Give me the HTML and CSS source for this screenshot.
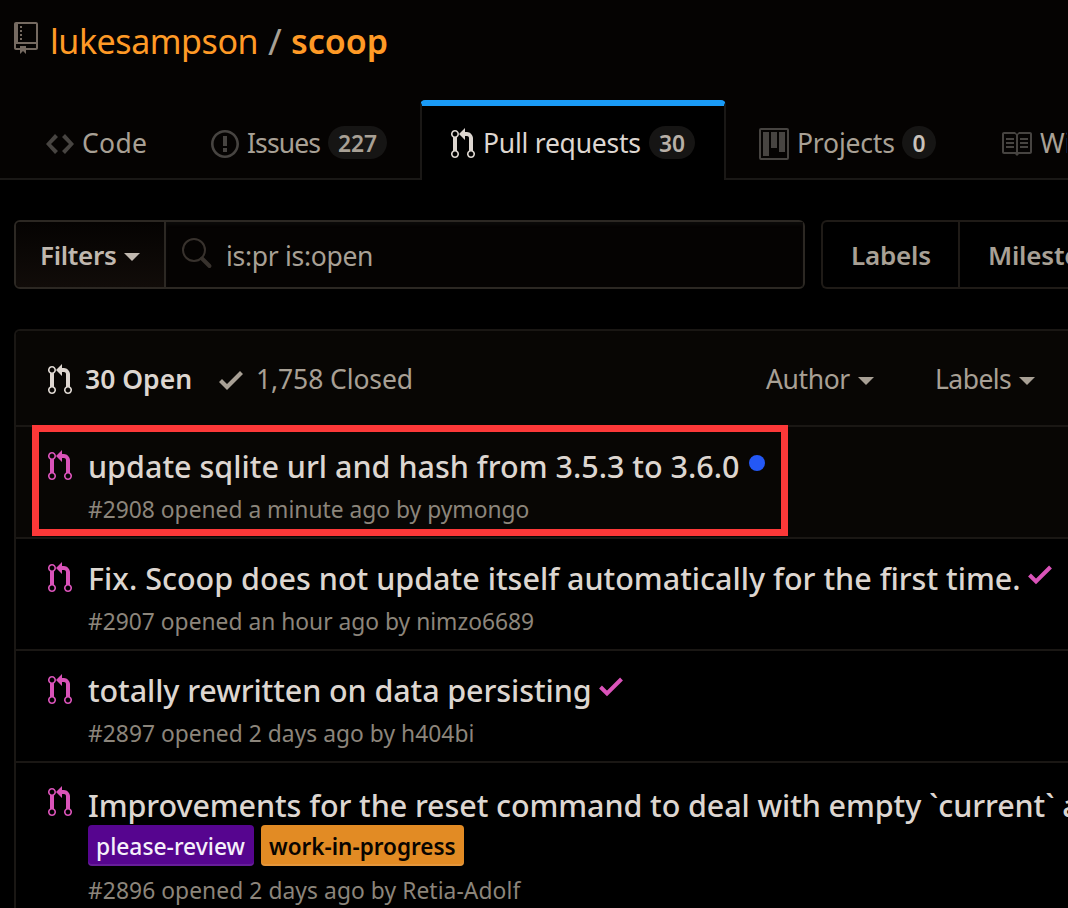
FILE: index.html
```html
<!DOCTYPE html>
<html lang="en">
<head>
<meta charset="utf-8">
<title>Pull requests · lukesampson/scoop</title>
<link rel="stylesheet" href="styles.css">
</head>
<body>
<svg class="sprite" aria-hidden="true">
  <symbol id="pr" viewBox="0 0 12 16"><path d="M11 11.28V5c-.03-.78-.34-1.47-.94-2.06C9.46 2.35 8.78 2.03 8 2H7V0L4 3l3 3V4h1c.27.02.48.11.69.31.21.2.3.42.31.69v6.28A1.993 1.993 0 0010 15a1.993 1.993 0 001-3.72zm-1 2.92c-.66 0-1.2-.55-1.2-1.2 0-.65.55-1.2 1.2-1.2.65 0 1.2.55 1.2 1.2 0 .65-.55 1.2-1.2 1.2zM4 3c0-1.11-.89-2-2-2a1.993 1.993 0 00-1 3.72v6.56A1.993 1.993 0 002 15a1.993 1.993 0 001-3.72V4.72c.59-.34 1-.98 1-1.72zm-.8 10c0 .66-.55 1.2-1.2 1.2-.65 0-1.2-.55-1.2-1.2 0-.65.55-1.2 1.2-1.2.65 0 1.2.55 1.2 1.2zM2 4.2C1.34 4.2.8 3.65.8 3c0-.65.55-1.2 1.2-1.2.65 0 1.2.55 1.2 1.2 0 .65-.55 1.2-1.2 1.2z"/></symbol>
  <symbol id="repo" viewBox="0 0 12 16"><path d="M4 9H3V8h1v1zm0-3H3v1h1V6zm0-2H3v1h1V4zm0-2H3v1h1V2zm8-1v12c0 .55-.45 1-1 1H6v2l-1.5-1.5L3 16v-2H1c-.55 0-1-.45-1-1V1c0-.55.45-1 1-1h10c.55 0 1 .45 1 1zm-1 10H1v2h2v-1h3v1h5v-2zm0-10H2v9h9V1z"/></symbol>
  <symbol id="code" viewBox="0 0 14 16"><path d="M9.5 3L8 4.5 11.5 8 8 11.5 9.5 13 14 8 9.5 3zm-5 0L0 8l4.5 5L6 11.5 2.5 8 6 4.5 4.5 3z"/></symbol>
  <symbol id="issue" viewBox="0 0 14 16"><path d="M7 2.3c3.14 0 5.7 2.56 5.7 5.7s-2.56 5.7-5.7 5.7A5.71 5.71 0 011.3 8c0-3.14 2.56-5.7 5.7-5.7zM7 1C3.14 1 0 4.14 0 8s3.14 7 7 7 7-3.14 7-7-3.14-7-7-7zm1 3H6v5h2V4zm0 6H6v2h2v-2z"/></symbol>
  <symbol id="project" viewBox="0 0 15 16"><path fill-rule="evenodd" d="M10 12h3V2h-3v10zm-4-2h3V2H6v8zm-4 4h3V2H2v12zm-1 1h13V1H1v14zM14 0H1a1 1 0 00-1 1v14a1 1 0 001 1h13a1 1 0 001-1V1a1 1 0 00-1-1z"/></symbol>
  <symbol id="book" viewBox="0 0 16 16"><path d="M3 5h4v1H3V5zm0 3h4V7H3v1zm0 2h4V9H3v1zm11-5h-4v1h4V5zm0 2h-4v1h4V7zm0 2h-4v1h4V9zm2-6v9c0 .55-.45 1-1 1H9.5l-1 1-1-1H2c-.55 0-1-.45-1-1V3c0-.55.45-1 1-1h5.5l1 1 1-1H15c.55 0 1 .45 1 1zm-8 .5L7.5 3H2v9h6V3.5zm7-.5H9.5l-.5.5V12h6V3z"/></symbol>
  <symbol id="check" viewBox="0 0 12 16"><path d="M12 5l-8 8-4-4 1.500-1.500L4 10l6.500-6.500L12 5z"/></symbol>
  <symbol id="tick" viewBox="0 0 24 20"><path d="M1.500 10L8 16.500 22.500 2" fill="none" stroke="currentColor" stroke-width="4"/></symbol>
  <symbol id="search" viewBox="0 0 32 32"><circle cx="13" cy="13" r="11" fill="none" stroke="currentColor" stroke-width="2"/><path d="M21 21.500L28.500 29" fill="none" stroke="currentColor" stroke-width="4" stroke-linecap="round"/></symbol>
</svg>

<header class="repo-head">
  <h1 class="repo-title">
    <svg class="icon repo-icon"><use href="#repo"/></svg>
    <a class="owner">lukesampson</a><span class="slash">/</span><a class="name">scoop</a>
  </h1>
  <nav class="tabs">
    <a class="tab tab-code"><svg class="icon w28"><use href="#code"/></svg><span class="t-code">Code</span></a>
    <a class="tab tab-issues"><svg class="icon w28"><use href="#issue"/></svg><span class="t-issues">Issues</span><span class="count c-issues">227</span></a>
    <a class="tab tab-pulls selected"><svg class="icon"><use href="#pr"/></svg><span class="t-pulls">Pull requests</span><span class="count c-pulls">30</span></a>
    <a class="tab tab-projects"><svg class="icon w30"><use href="#project"/></svg><span class="t-projects">Projects</span><span class="count c-projects">0</span></a>
    <a class="tab tab-wiki"><svg class="icon w32"><use href="#book"/></svg><span class="t-wiki">Wiki</span></a>
  </nav>
</header>

<main class="content">
  <div class="toolbar">
    <div class="search-group">
      <button class="filters">Filters<i class="caret"></i></button>
      <div class="search"><svg class="search-icon"><use href="#search"/></svg><span>is:pr is:open</span></div>
    </div>
    <div class="subnav"><a class="sub-labels">Labels</a><a class="sub-miles">Milestones</a></div>
  </div>

  <section class="list">
    <div class="list-head">
      <svg class="icon"><use href="#pr"/></svg><span class="open">30 Open</span>
      <svg class="icon check"><use href="#check"/></svg><span class="closed">1,758 Closed</span>
      <span class="menu menu-author">Author<i class="caret"></i></span>
      <span class="menu menu-labels">Labels<i class="caret"></i></span>
    </div>

    <article class="row unread">
      <svg class="icon"><use href="#pr"/></svg>
      <div class="body">
        <h2 class="title">update sqlite url and hash from 3.5.3 to 3.6.0<i class="dot"></i></h2>
        <p class="meta">#2908 opened a minute ago by pymongo</p>
      </div>
      <div class="highlight"></div>
    </article>

    <article class="row">
      <svg class="icon"><use href="#pr"/></svg>
      <div class="body">
        <h2 class="title">Fix. Scoop does not update itself automatically for the first time.<svg class="tick"><use href="#tick"/></svg></h2>
        <p class="meta m2">#2907 opened an hour ago by nimzo6689</p>
      </div>
    </article>

    <article class="row">
      <svg class="icon"><use href="#pr"/></svg>
      <div class="body">
        <h2 class="title t3">totally rewritten on data persisting<svg class="tick"><use href="#tick"/></svg></h2>
        <p class="meta m3">#2897 opened 2 days ago by h404bi</p>
      </div>
    </article>

    <article class="row labelled">
      <svg class="icon"><use href="#pr"/></svg>
      <div class="body">
        <h2 class="title t4">Improvements for the reset command to deal with empty `current` and</h2>
        <div class="labels"><span class="label review">please-review</span><span class="label wip">work-in-progress</span></div>
        <p class="meta m4">#2896 opened 2 days ago by Retia-Adolf</p>
      </div>
    </article>
  </section>
</main>
</body>
</html>
```

FILE: styles.css
```css
* { box-sizing: border-box; }

body {
  margin: 0;
  height: 908px;
  overflow: hidden;
  background: #000;
  color: #a8a095;
  font: 400 26.5px "Noto Sans", "Open Sans", sans-serif;
}

h1, h2, p { margin: 0; font-weight: 400; }
.sprite { display: none; }
.icon { flex: none; width: 24px; height: 32px; fill: currentColor; }
.w28 { width: 28px; }
.w30 { width: 30px; }
.w32 { width: 32px; }

.caret {
  display: inline-block;
  border: 8px solid transparent;
  border-top-color: currentColor;
  border-bottom: 0;
}

/* Repository header */
.repo-head { height: 180px; background: #050302; }

.repo-title {
  display: flex;
  height: 100px;
  padding-left: 14px;
  font-size: 34px;
  line-height: 82px;
  color: #ff9a26;
}
.repo-icon { margin-top: 22px; color: #756a61; }
.owner { width: 218px; padding-left: 12px; letter-spacing: -.45px; }
.slash { width: 22px; margin-left: 12px; color: #a8a095; font-size: 37px; }
.name { font-weight: 600; margin-left: 1px; }

.tabs {
  display: flex;
  height: 80px;
  border-bottom: 2px solid #1a1816;
}
.tab {
  display: flex;
  flex: none;
  align-items: flex-start;
  height: 78px;
  padding-top: 22px;
  line-height: 42px;
}
.tab .icon { margin-top: 6px; color: #474441; }
.tab-code { width: 181px; padding-left: 46px; }
.tab-issues { width: 239px; padding-left: 30px; }
.tab-projects { width: 243px; padding-left: 33px; }
.tab-wiki { padding-left: 31px; }
.tab-pulls { width: 306px; padding-left: 29px; }

.tab.selected {
  height: 80px;
  padding-top: 16px;
  border: solid #1a1816;
  border-width: 0 2px;
  border-top: 6px solid #1a9bf7;
  border-radius: 5px 5px 0 0;
  background: #000;
  color: #ddd6d0;
}
.selected .icon { color: #ddd6d0; }

.t-code { margin-left: 8px; letter-spacing: .3px; }
.t-issues { width: 81px; margin-left: 8px; letter-spacing: -.9px; }
.t-pulls { width: 166px; margin-left: 8px; letter-spacing: -.25px; }
.t-projects { width: 105px; margin-left: 8px; letter-spacing: -.2px; }
.t-wiki { width: 27px; margin-left: 8px; overflow: hidden; }

.count {
  height: 33px;
  margin-top: 4px;
  border-radius: 17px;
  background: #161514;
  font-size: 22.8px;
  font-weight: 600;
  line-height: 36px;
  text-align: center;
}
.c-issues { width: 59px; }
.c-pulls { width: 46px; color: #b8b0a7; }
.c-projects { width: 34px; color: #c9c2bb; }

/* Search and sub navigation */
.content { padding: 40px 0 0 14px; }
.toolbar { display: flex; gap: 16px; height: 69px; font-weight: 600; }

.search-group {
  display: flex;
  flex: none;
  width: 791px;
  border: 2px solid #2c2823;
  border-radius: 6px;
  background: #050302;
}
.filters {
  width: 150px;
  padding: 1px 0 0 24px;
  border: 0;
  border-right: 2px solid #2c2823;
  border-radius: 4px 0 0 4px;
  background: linear-gradient(#050302, #110c09);
  color: #c0b8af;
  font: inherit;
  font-size: 26px;
  letter-spacing: -.3px;
  text-align: left;
}
.filters .caret { margin: 0 0 4px 8px; }
.search {
  display: flex;
  align-items: center;
  flex: 1;
  padding: 3px 0 0 15px;
  box-shadow: inset 0 3px 3px #0b0a09;
  font-weight: 400;
  letter-spacing: -.3px;
}
.search-icon { width: 32px; height: 32px; margin: -6px 13px 0 0; color: #38322d; }

.subnav {
  display: flex;
  flex: 1;
  overflow: hidden;
  border: 2px solid #1f1b17;
  border-right: 0;
  border-radius: 6px 0 0 6px;
  font-size: 26px;
  line-height: 66px;
  letter-spacing: -.2px;
}
.sub-labels { flex: none; width: 137px; padding-left: 28px; border-right: 2px solid #1f1b17; }
.sub-miles { padding-left: 28px; }

/* Pull request list */
.list {
  margin-top: 40px;
  border: 2px solid #1a1714;
  border-width: 2px 0 0 2px;
  border-radius: 6px 0 0 0;
  overflow: hidden;
  height: 579px;
}
.list-head {
  display: flex;
  height: 94px;
  padding-left: 32px;
  border-radius: 4px 0 0 0;
  background: #080604;
  line-height: 96px;
}
.list-head .icon { margin-top: 33px; color: #ddd6d0; }
.open { flex: none; width: 134px; margin-left: 13px; color: #ddd6d0; font-weight: 600; letter-spacing: 0; }
.list-head .check { color: #a8a095; }
.closed { flex: none; width: 523px; padding-left: 13px; letter-spacing: -.1px; }
.menu { flex: none; width: 169px; letter-spacing: -.4px; }
.menu-labels { width: 120px; letter-spacing: -.55px; }
.menu .caret { margin: 0 0 4px 8px; }

.row {
  position: relative;
  display: flex;
  height: 112px;
  padding: 16px 0 0 32px;
  border-top: 2px solid #1a1714;
}
.row .icon { margin: 7px 16px 0 0; color: #da53b9; }
.unread { background: #080604; }

.title {
  display: flex;
  height: 44px;
  color: #ddd6d0;
  font-size: 30.5px;
  font-weight: 500;
  line-height: 46px;
  white-space: nowrap;
}
.t3 { letter-spacing: -.1px; }
.t4 { letter-spacing: -.1px; }
.dot { width: 16px; height: 16px; margin: 12px 0 0 9px; border-radius: 50%; background: #2458f5; }
.tick { width: 24px; height: 20px; margin: 10px 0 0 7px; color: #da53b9; }
.t3 .tick { margin-left: 8px; }

.meta { color: #8c857b; font-size: 22.8px; line-height: 45px; white-space: nowrap; }
.m3 { letter-spacing: .03px; }
.m4 { letter-spacing: .07px; }

.highlight {
  position: absolute;
  left: 16px;
  top: -2px;
  width: 756px;
  height: 111px;
  border: 7px solid #fc3838;
}

.labelled { height: 150px; }
.labelled .body { flex: 1; min-width: 0; }
.labelled .title { margin-top: 3px; }
.labels { display: flex; gap: 7px; margin-top: -1px; }
.label {
  height: 41px;
  padding-left: 8px;
  border-radius: 4px;
  box-shadow: inset 0 -2px 0 rgba(255, 255, 255, .1);
  font-size: 22.8px;
  font-weight: 500;
  line-height: 43px;
}
.review { width: 166px; background: #56058f; color: #f5f0fa; }
.wip { width: 203px; background: #e28b24; color: #080400; font-size: 22.5px; font-weight: 600; }
.labelled .meta { margin-top: 2px; line-height: 45px; }
```
